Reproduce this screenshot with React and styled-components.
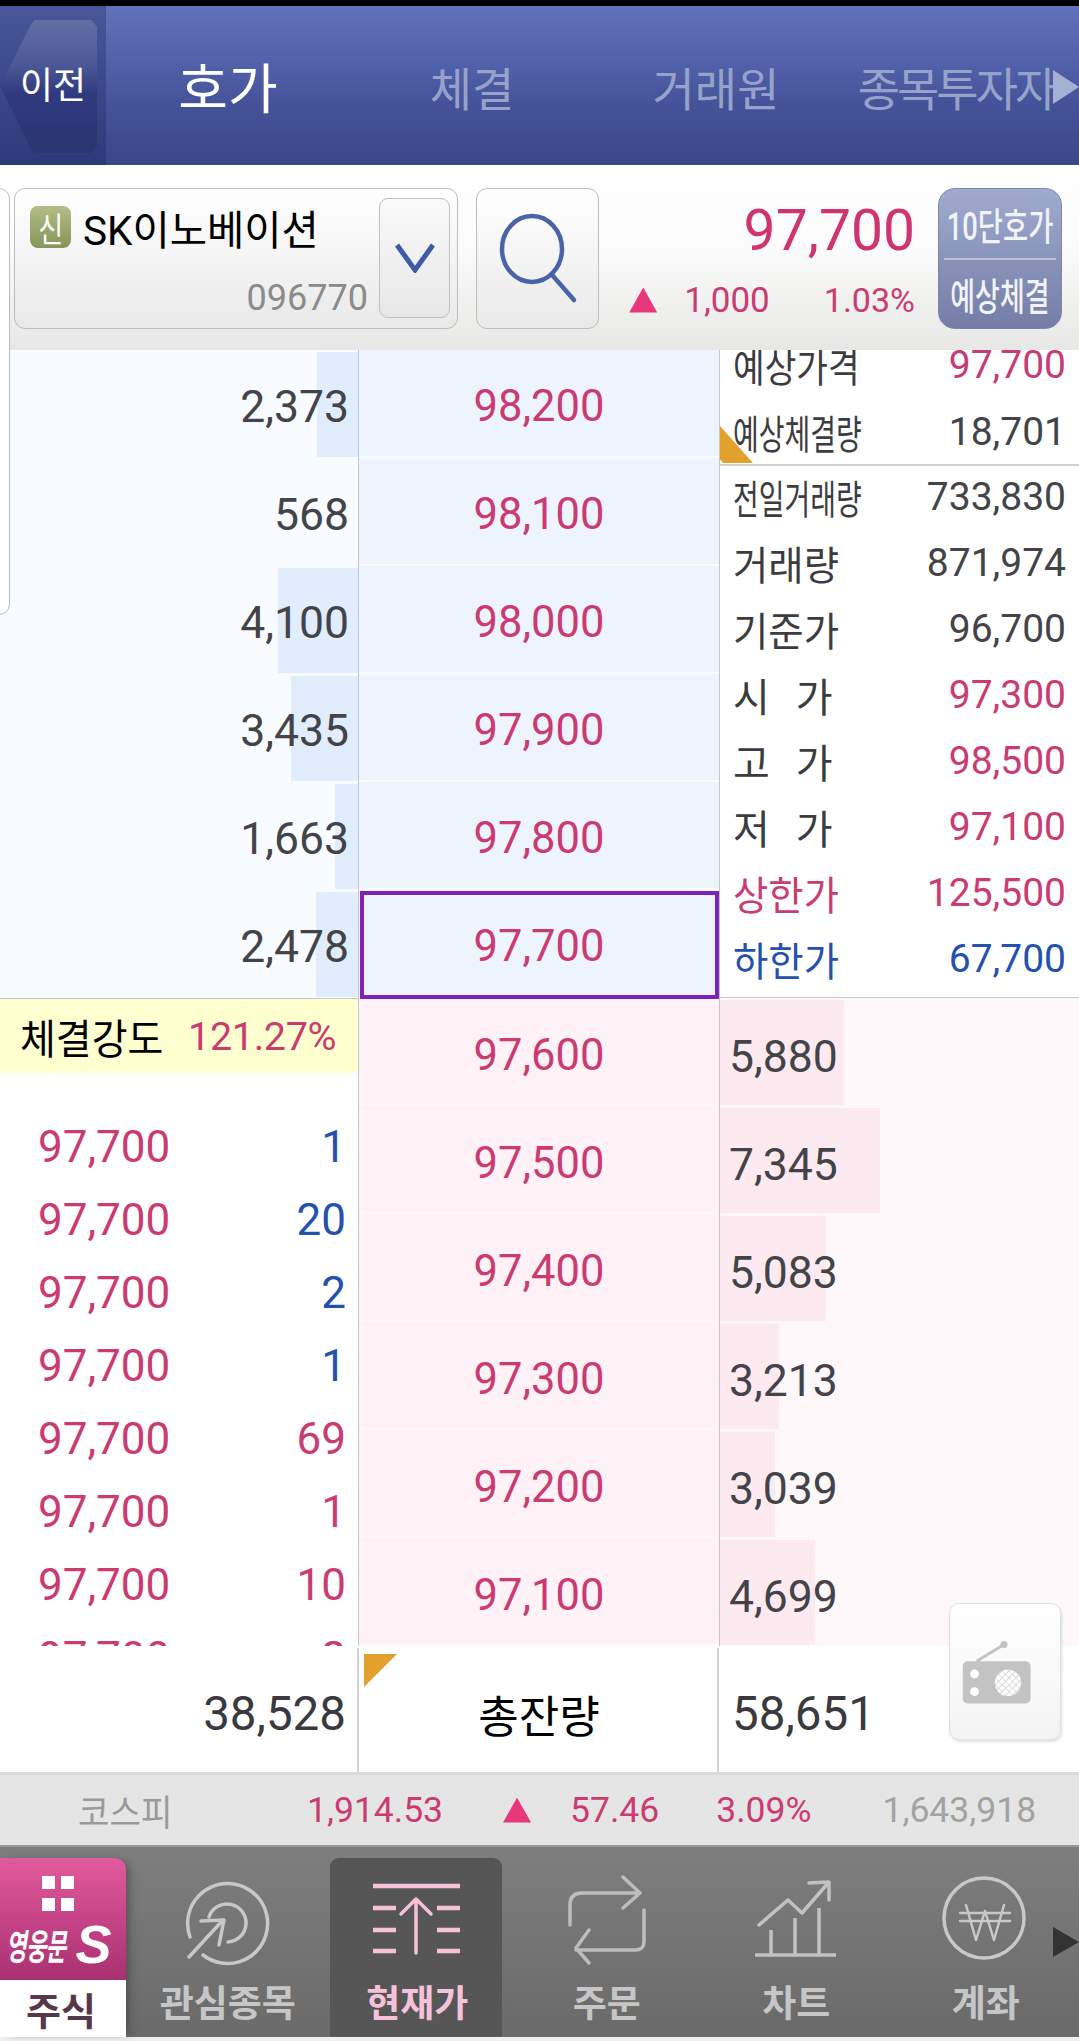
import React from "react";
import styled, { createGlobalStyle } from "styled-components";

const PINK = "#cb3b72";
const BLUE = "#2450b0";
const INK = "#444448";

const Global = createGlobalStyle`
  html, body { margin: 0; padding: 0; background: #fff; overflow: hidden; }
  * { box-sizing: border-box; }
  body { font-family: Roboto, "Noto Sans CJK KR", sans-serif; }
`;

const Page = styled.div`
  position: relative;
  width: 1079px;
  height: 2041px;
  overflow: hidden;
  background: #f0f0f0;
  border-top: 6px solid #000;
  font-family: Roboto, "Noto Sans CJK KR", sans-serif;
`;

/* Squeezed text: the app's Korean face is much narrower than Noto */
const Sq = styled.span`
  display: inline-block;
  white-space: nowrap;
  transform: scaleX(${(p) => p.$x || 1});
  transform-origin: ${(p) => p.$o || "left"} center;
`;

/* ---------- header ---------- */
const Header = styled.header`
  display: flex;
  height: 159px;
  background: linear-gradient(#6272ba 0%, #5262aa 35%, #45539a 60%, #3a4788 100%);
`;
const BackPanel = styled.div`
  width: 106px;
  padding-top: 14px;
  background: linear-gradient(#475797, #2d3a7a);
`;
const BackShape = styled.div`
  width: 97px;
  height: 133px;
  display: flex;
  align-items: center;
  padding-left: 20px;
  color: #fff;
  font-size: 37px;
  background: linear-gradient(#626fa5 0%, #4a5795 35%, #2f3b7f 55%, #29356f 100%);
  clip-path: polygon(0 50%, 32% 3%, 36% 0, 94% 0, 100% 5%, 100% 95%, 94% 100%, 36% 100%, 32% 97%);
`;
const BackLabel = styled(Sq)`
  line-height: 1;
`;
const Tabs = styled.nav`
  display: grid;
  grid-template-columns: 244px 244px 244px 236px;
  flex: 1;
`;
const Tab = styled.div`
  display: flex;
  align-items: center;
  justify-content: center;
  font-size: ${(p) => (p.$active ? 54 : 46)}px;
  color: ${(p) => (p.$active ? "#fff" : "#97a2cb")};
  letter-spacing: ${(p) => p.$ls || 0}px;
  white-space: nowrap;
`;
const TabMore = styled.div`
  position: absolute;
  top: 64px;
  right: 0;
  width: 26px;
  height: 34px;
  background: #a6b0d3;
  clip-path: polygon(0 0, 100% 50%, 0 100%);
`;

/* ---------- toolbar ---------- */
const Toolbar = styled.section`
  display: flex;
  align-items: flex-start;
  height: 185px;
  padding: 23px 17px 0 14px;
  background: linear-gradient(#fff 0%, #fbfbfb 45%, #e7e7e5 100%);
`;
const Combo = styled.div`
  display: flex;
  width: 444px;
  height: 141px;
  padding: 9px 7px 10px 15px;
  border: 1px solid #bdbdbd;
  border-radius: 11px;
  background: linear-gradient(#fff, #e9e9e9);
`;
const ComboText = styled.div`
  flex: 1;
  display: flex;
  flex-direction: column;
  justify-content: space-between;
  padding-right: 11px;
`;
const NameRow = styled.div`
  display: flex;
  align-items: center;
  gap: 12px;
  height: 44px;
  margin-top: 7px;
  font-size: 40.5px;
  color: #000;
  white-space: nowrap;
`;
const Badge = styled.span`
  flex: none;
  display: flex;
  align-items: center;
  justify-content: center;
  width: 41px;
  height: 42px;
  border-radius: 8px;
  color: #fff;
  font-size: 34px;
  background: linear-gradient(#b4bd86, #869557);
`;
const Code = styled.div`
  align-self: flex-end;
  font-size: 36px;
  line-height: 32px;
  margin-bottom: 4px;
  color: #8b8b8b;
`;
const Drop = styled.div`
  display: flex;
  align-items: center;
  justify-content: center;
  width: 71px;
  height: 120px;
  border: 1px solid #c0c0c0;
  border-radius: 9px;
  background: linear-gradient(#fafafa, #e7e7e7);
`;
const SearchBtn = styled.button`
  width: 123px;
  height: 141px;
  margin-left: 18px;
  padding: 0;
  border: 1px solid #bdbdbd;
  border-radius: 11px;
  background: linear-gradient(#fff, #e9e9e9);
  display: flex;
  align-items: center;
  justify-content: center;
`;
const Quote = styled.div`
  flex: 1;
  display: flex;
  flex-direction: column;
  align-items: flex-end;
  padding: 13px 23px 0 0;
  color: ${PINK};
`;
const BigPrice = styled.div`
  font-size: 57px;
  line-height: 60px;
  color: #cf3470;
`;
const Delta = styled.div`
  display: flex;
  align-items: center;
  height: 40px;
  margin-top: 19px;
  font-size: 35px;
`;
const UpTri = styled.i`
  display: block;
  width: 28px;
  height: 25px;
  background: #e6387a;
  clip-path: polygon(50% 0, 100% 100%, 0 100%);
`;
const DeltaGap = styled.span`
  display: block;
  width: ${(p) => p.$w}px;
`;
const Pct = styled.span`
  font-size: 34px;
`;
const ModeBtn = styled.div`
  display: flex;
  flex-direction: column;
  width: 124px;
  height: 141px;
  padding: 0 5px;
  border-radius: 17px;
  background: linear-gradient(#a0abcf, #737da6);
  border: 1px solid #7c87ad;
  color: #f1f3f9;
  font-size: 38px;
  font-weight: 500;
`;
const ModeCell = styled.div`
  flex: 1;
  display: flex;
  align-items: center;
  justify-content: center;
  & + & { border-top: 2px solid #b8c0da; }
`;

/* ---------- order book ---------- */
const Book = styled.section`
  display: grid;
  grid-template-columns: 359px 360px 360px;
  height: 1296px;
  background: #fff;
`;
const Col = styled.div`
  position: relative;
  overflow: hidden;
  display: flex;
  flex-direction: column;
  height: 1296px;
  border-${(p) => p.$line || "left"}: ${(p) => (p.$line ? "1px solid #c6c6ca" : "0 none")};
`;
const AskQty = styled.div`
  display: flex;
  align-items: center;
  justify-content: flex-end;
  flex: none;
  height: 108px;
  padding: 6px 9px 0 0;
  font-size: 44.5px;
  color: ${INK};
  background:
    linear-gradient(#e1edfc, #e1edfc) right 2px / ${(p) => p.$w}px 105px no-repeat,
    #f8fbff;
`;
const Strength = styled.div`
  display: flex;
  align-items: center;
  flex: none;
  height: 75px;
  padding-left: 20px;
  background: #ffffcf;
  border-top: 1px solid #c6c6ca;
  color: #000;
  font-size: 41px;
`;
const StrengthLabel = styled(Sq)`
  width: 168px;
`;
const StrengthValue = styled.span`
  font-size: 39.5px;
  color: ${PINK};
  letter-spacing: -.3px;
`;
const Trades = styled.div`
  flex: none;
  padding-top: 37px;
  background: #fff;
`;
const Trade = styled.div`
  display: flex;
  justify-content: space-between;
  align-items: center;
  height: 73px;
  padding: 0 12px 0 38px;
  font-size: 44px;
  color: ${PINK};
`;
const TradeVol = styled.span`
  color: ${(p) => (p.$up ? PINK : BLUE)};
`;
const PriceCell = styled.div`
  display: flex;
  align-items: center;
  justify-content: center;
  flex: none;
  height: 108px;
  padding-top: ${(p) => (p.$bid ? 9 : 7)}px;
  font-size: 43.5px;
  color: ${PINK};
  background: ${(p) => (p.$bid ? "#fef2f7" : "#eef4fe")};
  border-bottom: 2px solid ${(p) => (p.$bid ? "#fff8fb" : "#f9fbff")};
`;
const CurrentBox = styled.div`
  position: absolute;
  left: 1px;
  top: 541px;
  width: 359px;
  height: 108px;
  border: 4px solid #7e22b8;
`;
const Stats = styled.div`
  flex: none;
  height: 648px;
  background: #fff;
  border-bottom: 1px solid #c6c6ca;
`;
const Expect = styled.div`
  position: relative;
  height: 116px;
  overflow: hidden;
  border-bottom: 2px solid #cfcfcf;
`;
const ExpectInner = styled.div`
  margin-top: -19px;
`;
const StatRow = styled.div`
  display: flex;
  align-items: center;
  justify-content: space-between;
  height: ${(p) => p.$h || 66}px;
  padding: 0 13px ${(p) => p.$pb ?? 4}px 13px;
  font-size: 39px;
  color: ${INK};
  white-space: nowrap;
`;
const StatLabel = styled(Sq)`
  font-size: 40px;
  letter-spacing: ${(p) => p.$ls || 0}px;
  color: ${(p) => p.$c || "#3c3c40"};
`;
const StatValue = styled.span`
  color: ${(p) => p.$c || INK};
`;
const CornerMark = styled.i`
  position: absolute;
  left: 0;
  bottom: 1px;
  width: 33px;
  height: 37px;
  background: #e3a02c;
  clip-path: polygon(0 0, 100% 100%, 10% 100%, 0 90%);
`;
const BidQty = styled.div`
  display: flex;
  align-items: center;
  flex: none;
  height: 108px;
  padding: 10px 0 0 9px;
  font-size: 44.5px;
  color: ${INK};
  background:
    linear-gradient(#fdeaf1, #fdeaf1) left 2px / ${(p) => p.$w}px 105px no-repeat,
    #fff8fb;
`;

/* ---------- totals ---------- */
const Totals = styled.section`
  display: grid;
  grid-template-columns: 359px 360px 360px;
  height: 126px;
  padding-top: 2px;
  background: #fff;
`;
const TotalCell = styled.div`
  position: relative;
  display: flex;
  align-items: center;
  justify-content: ${(p) => p.$j};
  padding: 8px 11px 0 13px;
  font-size: 47.5px;
  color: #3a3a3e;
  border-right: ${(p) => (p.$line ? "2px solid #d4d4d4" : "none")};
`;
const TotalTitle = styled(Sq)`
  font-size: 44px;
  color: #000;
`;
const FlagMark = styled.i`
  position: absolute;
  left: 5px;
  top: 6px;
  width: 33px;
  height: 33px;
  background: #e3a02c;
  clip-path: polygon(0 0, 100% 0, 0 100%);
`;
const RadioBtn = styled.div`
  position: absolute;
  right: 18px;
  top: 1597px;
  width: 112px;
  height: 137px;
  border: 1px solid #e0e0e0;
  border-radius: 10px;
  background: linear-gradient(#fff, #f3f3f3);
  box-shadow: 1px 2px 3px rgba(0, 0, 0, .12);
`;
const SideSheetEdge = styled.div`
  position: absolute;
  left: -4px;
  top: 182px;
  width: 14px;
  height: 427px;
  border: 1px solid #bcbcc0;
  border-radius: 0 11px 11px 0;
  background: #fff;
`;

/* ---------- index strip ---------- */
const IndexBar = styled.section`
  display: flex;
  align-items: center;
  height: 73px;
  padding-left: 78px;
  background: #e5e5e5;
  border-top: 3px solid #dadada;
  font-size: 35.5px;
  color: ${PINK};
`;
const IndexName = styled(Sq)`
  width: 229px;
  font-size: 36px;
  color: #9a9a9a;
`;
const IndexGap = styled.span`
  display: block;
  width: ${(p) => p.$w}px;
`;
const IndexVol = styled.span`
  color: #a2a2a2;
`;

/* ---------- bottom nav ---------- */
const BottomNav = styled.nav`
  position: relative;
  display: flex;
  height: 192px;
  border-top: 2px solid #989898;
  background: linear-gradient(#7e7e7e, #6a6a6a);
`;
const Brand = styled.div`
  display: flex;
  flex-direction: column;
  flex: none;
  width: 126px;
  height: 179px;
  margin: 11px 6px 0 0;
  box-shadow: 6px 0 8px -3px rgba(40, 40, 40, .45);
  border-top-right-radius: 12px;
  overflow: hidden;
`;
const BrandTop = styled.div`
  height: 122px;
  padding-top: 18px;
  background: linear-gradient(#e25a9d, #a93072);
`;
const Dots = styled.div`
  display: grid;
  grid-template-columns: 13px 13px;
  grid-auto-rows: 13px;
  gap: 9px 6px;
  justify-content: center;
  padding-right: 10px;
  & > i { background: #fff; display: block; }
`;
const BrandName = styled.div`
  display: flex;
  align-items: center;
  height: 44px;
  margin-top: 11px;
  padding-left: 6px;
  color: #fff;
  font-weight: 700;
  font-style: italic;
  font-size: 36px;
  letter-spacing: -1px;
`;
const BrandS = styled.span`
  margin-left: -27px;
  font-family: "Liberation Sans", sans-serif;
  font-size: 54px;
  font-style: italic;
  font-weight: 700;
`;
const BrandFoot = styled.div`
  flex: 1;
  display: flex;
  align-items: center;
  justify-content: center;
  padding-right: 4px;
  background: #fff;
  color: #56384a;
  font-size: 38px;
  font-weight: 700;
`;
const Item = styled.div`
  flex: none;
  width: 189.5px;
  display: flex;
  justify-content: center;
  padding-top: 11px;
`;
const ItemTile = styled.div`
  display: flex;
  flex-direction: column;
  align-items: center;
  width: 172px;
  height: 179px;
  padding-top: 10px;
  border-radius: 9px 9px 0 0;
  background: ${(p) => (p.$active ? "#565656" : "transparent")};
`;
const ItemLabel = styled.div`
  height: 50px;
  margin-top: 12px;
  padding-left: 2px;
  line-height: 50px;
  font-size: 37px;
  font-weight: 700;
  white-space: nowrap;
  color: ${(p) => (p.$active ? "#f6c2da" : "#c6c6c6")};
`;
const NavMore = styled.i`
  position: absolute;
  right: 0;
  top: 80px;
  width: 26px;
  height: 30px;
  background: #333;
  clip-path: polygon(0 0, 100% 50%, 0 100%);
`;

const Ico = ({ box, stroke = "#c8c8c8", sw = 3.5, children }) => (
  <svg width="100" height="100" viewBox={box} fill="none" stroke={stroke} strokeWidth={sw} strokeLinecap="round" strokeLinejoin="round">
    {children}
  </svg>
);

const asks = [
  ["98,200", "2,373", 41],
  ["98,100", "568", 0],
  ["98,000", "4,100", 80],
  ["97,900", "3,435", 67],
  ["97,800", "1,663", 23],
  ["97,700", "2,478", 42],
];
const bids = [
  ["97,600", "5,880", 124],
  ["97,500", "7,345", 160],
  ["97,400", "5,083", 106],
  ["97,300", "3,213", 59],
  ["97,200", "3,039", 55],
  ["97,100", "4,699", 95],
];
const trades = [
  ["1", 0], ["20", 0], ["2", 0], ["1", 0], ["69", 1], ["1", 1], ["10", 1], ["2", 1],
];
const stats = [
  ["전일거래량", "733,830", 0.7],
  ["거래량", "871,974", 0.96],
  ["기준가", "96,700", 0.96],
];

export default function App() {
  return (
    <Page>
      <Global />
      <Header>
        <BackPanel>
          <BackShape><BackLabel $x={0.97}>이전</BackLabel></BackShape>
        </BackPanel>
        <Tabs>
          <Tab $active>호가</Tab>
          <Tab>체결</Tab>
          <Tab>거래원</Tab>
          <Tab $ls={-3}>종목투자자</Tab>
        </Tabs>
        <TabMore />
      </Header>

      <Toolbar>
        <Combo>
          <ComboText>
            <NameRow>
              <Badge><Sq $x={0.8} $o="center">신</Sq></Badge>
              <span>SK이노베이션</span>
            </NameRow>
            <Code>096770</Code>
          </ComboText>
          <Drop>
            <svg width="40" height="30" viewBox="0 0 40 30" fill="none" stroke="#3f5aa6" strokeWidth="5">
              <path d="M2 2 L20 27 L38 2" />
            </svg>
          </Drop>
        </Combo>
        <SearchBtn aria-label="검색">
          <svg width="80" height="92" viewBox="0 0 80 92" fill="none" stroke="#4a63a8" strokeWidth="4.5" strokeLinecap="round">
            <ellipse cx="34" cy="36" rx="30" ry="33" />
            <path d="M55 63 L76 87" />
          </svg>
        </SearchBtn>
        <Quote>
          <BigPrice>97,700</BigPrice>
          <Delta>
            <UpTri />
            <DeltaGap $w={27} />
            <span>1,000</span>
            <DeltaGap $w={54} />
            <Pct>1.03%</Pct>
          </Delta>
        </Quote>
        <ModeBtn>
          <ModeCell><Sq $x={0.72} $o="center">10단호가</Sq></ModeCell>
          <ModeCell><Sq $x={0.71} $o="center">예상체결</Sq></ModeCell>
        </ModeBtn>
      </Toolbar>

      <Book>
        <Col $line="right">
          {asks.map(([, q, w]) => (
            <AskQty key={q} $w={w}>{q}</AskQty>
          ))}
          <Strength>
            <StrengthLabel $x={0.95}>체결강도</StrengthLabel>
            <StrengthValue>121.27%</StrengthValue>
          </Strength>
          <Trades>
            {trades.map(([v, up], i) => (
              <Trade key={i}>
                <span>97,700</span>
                <TradeVol $up={up}>{v}</TradeVol>
              </Trade>
            ))}
          </Trades>
        </Col>
        <Col>
          {asks.map(([p]) => (
            <PriceCell key={p}>{p}</PriceCell>
          ))}
          {bids.map(([p]) => (
            <PriceCell key={p} $bid>{p}</PriceCell>
          ))}
          <CurrentBox />
        </Col>
        <Col $line="left">
          <Stats>
            <Expect>
              <ExpectInner>
                <StatRow $h={68} $pb={0}>
                  <StatLabel $x={0.86}>예상가격</StatLabel>
                  <StatValue $c="#c43c78">97,700</StatValue>
                </StatRow>
                <StatRow $pb={0}>
                  <StatLabel $x={0.7}>예상체결량</StatLabel>
                  <StatValue>18,701</StatValue>
                </StatRow>
              </ExpectInner>
              <CornerMark />
            </Expect>
            {stats.map(([l, v, x]) => (
              <StatRow key={l}>
                <StatLabel $x={x}>{l}</StatLabel>
                <StatValue>{v}</StatValue>
              </StatRow>
            ))}
            <StatRow>
              <StatLabel $ls={26}>시가</StatLabel>
              <StatValue $c={PINK}>97,300</StatValue>
            </StatRow>
            <StatRow>
              <StatLabel $ls={26}>고가</StatLabel>
              <StatValue $c={PINK}>98,500</StatValue>
            </StatRow>
            <StatRow>
              <StatLabel $ls={26}>저가</StatLabel>
              <StatValue $c={PINK}>97,100</StatValue>
            </StatRow>
            <StatRow>
              <StatLabel $x={0.96} $c={PINK}>상한가</StatLabel>
              <StatValue $c={PINK}>125,500</StatValue>
            </StatRow>
            <StatRow>
              <StatLabel $x={0.96} $c={BLUE}>하한가</StatLabel>
              <StatValue $c={BLUE}>67,700</StatValue>
            </StatRow>
          </Stats>
          {bids.map(([, q, w]) => (
            <BidQty key={q} $w={w}>{q}</BidQty>
          ))}
        </Col>
      </Book>

      <Totals>
        <TotalCell $j="flex-end" $line>38,528</TotalCell>
        <TotalCell $j="center" $line>
          <FlagMark />
          <TotalTitle $o="center">총잔량</TotalTitle>
        </TotalCell>
        <TotalCell $j="flex-start">58,651</TotalCell>
      </Totals>
      <RadioBtn>
        <svg width="110" height="135" viewBox="0 0 112 137" fill="none">
          <defs>
            <pattern id="mesh" width="5" height="5" patternUnits="userSpaceOnUse" patternTransform="rotate(45)">
              <rect width="5" height="5" fill="#fff" />
              <path d="M0 0H5M0 0V5" stroke="#c3c3c3" strokeWidth="1.2" />
            </pattern>
          </defs>
          <path d="M27 58 L55 41" stroke="#c3c3c3" strokeWidth="3" />
          <circle cx="55" cy="41" r="3.5" fill="#c3c3c3" />
          <rect x="13" y="58" width="69" height="43" rx="5" fill="#c3c3c3" />
          <circle cx="25" cy="71" r="4.5" fill="#fff" />
          <circle cx="25" cy="89" r="4.5" fill="#fff" />
          <circle cx="59" cy="80" r="13.5" fill="url(#mesh)" />
        </svg>
      </RadioBtn>
      <SideSheetEdge />

      <IndexBar>
        <IndexName $x={0.95}>코스피</IndexName>
        <span>1,914.53</span>
        <IndexGap $w={60} />
        <UpTri />
        <IndexGap $w={39} />
        <span>57.46</span>
        <IndexGap $w={57} />
        <span>3.09%</span>
        <IndexGap $w={71} />
        <IndexVol>1,643,918</IndexVol>
      </IndexBar>

      <BottomNav>
        <Brand>
          <BrandTop>
            <Dots><i /><i /><i /><i /></Dots>
            <BrandName>
              <Sq $x={0.62}>영웅문</Sq>
              <BrandS>S</BrandS>
            </BrandName>
          </BrandTop>
          <BrandFoot>주식</BrandFoot>
        </Brand>
        <Item>
          <ItemTile>
            <Ico box="179 1868 100 100">
              <path d="M192 1937 A40 40 0 1 1 205 1955" />
              <path d="M211 1917 A19 19 0 1 1 230 1942" />
              <path d="M191 1957 L225 1920 M203 1921 L226 1920 L221 1945" />
            </Ico>
            <ItemLabel>관심종목</ItemLabel>
          </ItemTile>
        </Item>
        <Item>
          <ItemTile $active>
            <Ico box="366 1868 100 100" stroke="#f6c2da" sw={3.5}>
              <path strokeLinecap="butt" strokeWidth="4.5" d="M373 1886 H460 M373 1908 H396 M437 1908 H460 M373 1930 H396 M437 1930 H460 M373 1951 H396 M437 1951 H460" />
              <path d="M416 1953 V1899 M401 1914 L416 1899 L431 1914" />
            </Ico>
            <ItemLabel $active>현재가</ItemLabel>
          </ItemTile>
        </Item>
        <Item>
          <ItemTile>
            <Ico box="556 1868 100 100" stroke="#bdbdbd">
              <path d="M570 1925 V1905 Q570 1893 582 1893 H640 M623 1877 L640 1893 L623 1908" />
              <path d="M644 1910 V1942 Q644 1950 635 1950 H576 M589 1930 L576 1948 L589 1963" />
            </Ico>
            <ItemLabel>주문</ItemLabel>
          </ItemTile>
        </Item>
        <Item>
          <ItemTile>
            <Ico box="745 1868 100 100" stroke="#c2c2c2">
              <path strokeLinecap="butt" d="M755 1955 H836 M771 1955 V1930 M795 1955 V1918 M819 1955 V1908" />
              <path d="M759 1925 L788 1900 L802 1913 L829 1882 M809 1883 L829 1882 L829 1900" />
            </Ico>
            <ItemLabel>차트</ItemLabel>
          </ItemTile>
        </Item>
        <Item>
          <ItemTile>
            <Ico box="935 1868 100 100" sw={3}>
              <circle cx="984" cy="1918" r="40" strokeWidth="3.5" />
              <path strokeWidth="2.5" d="M966 1905 L976 1940 L985 1911 L994 1940 L1004 1905 M960 1913 H1010 M960 1921 H1010" />
            </Ico>
            <ItemLabel>계좌</ItemLabel>
          </ItemTile>
        </Item>
        <NavMore />
      </BottomNav>
    </Page>
  );
}
